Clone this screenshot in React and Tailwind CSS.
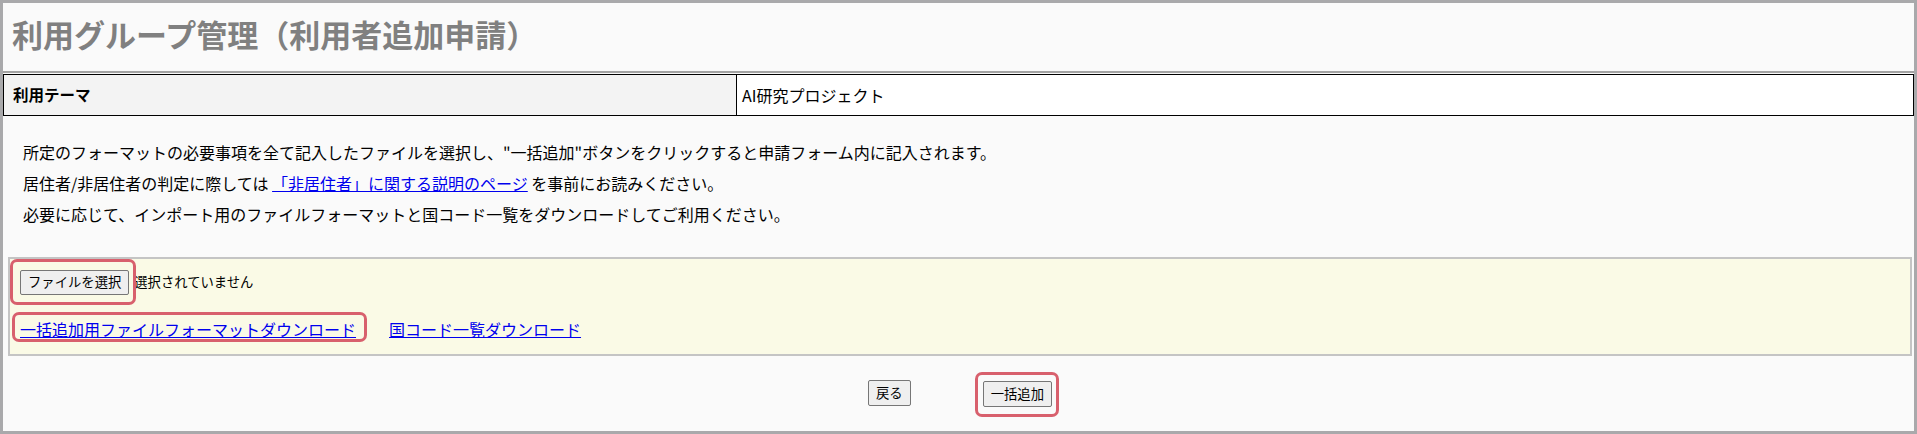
export default function App() {
  const redBox =
    "pointer-events-none absolute border-[3px] border-[#d8606d] rounded-[7px]";
  const btn =
    "h-[26px] px-[7px] bg-[#efefef] border border-[#767676] rounded-[2px] text-[13.33px] leading-none text-black";

  return (
    <div className="h-[434px] w-full border-[3px] border-[#a9a9ab] bg-[#fafafa] font-['Noto_Sans_CJK_JP',sans-serif] text-black">
      {/* Title */}
      <div className="h-[70px] border-b-2 border-[#a3a3a3] pl-[9px] pt-[15px]">
        <h1 className="text-[31px] leading-[31px] font-bold text-[#808080]">
          利用グループ管理（利用者追加申請）
        </h1>
      </div>

      {/* Theme row */}
      <div className="mt-[1px] flex h-[42px] border border-black">
        <div className="flex w-[733px] items-center border-r border-black bg-[#f3f3f3] pl-[9px] text-[15.5px] font-bold">
          利用テーマ
        </div>
        <div className="flex flex-1 items-center bg-white pl-[5px] text-[16px]">
          AI研究プロジェクト
        </div>
      </div>

      {/* Description */}
      <div className="mt-[21px] pl-[20px] text-[16px] leading-[31px]">
        <p>
          所定のフォーマットの必要事項を全て記入したファイルを選択し、"一括追加"ボタンをクリックすると申請フォーム内に記入されます。
        </p>
        <p>
          居住者/非居住者の判定に際しては{" "}
          <a href="#" className="text-[#0000ee] underline">
            「非居住者」に関する説明のページ
          </a>{" "}
          を事前にお読みください。
        </p>
        <p>
          必要に応じて、インポート用のファイルフォーマットと国コード一覧をダウンロードしてご利用ください。
        </p>
      </div>

      {/* Import box */}
      <div className="ml-[5px] mr-[2px] mt-[27px] h-[99px] border-2 border-[#c4c4c4] bg-[#fafae6] pl-[10px] pt-[10px]">
        <div className="flex h-[25px] items-center">
          <div className="relative">
            <button className="h-[25px] px-[7px] bg-[#efefef] border border-[#767676] rounded-[2px] text-[13.33px] leading-none">
              ファイルを選択
            </button>
            <span className={`${redBox} -left-[10px] -top-[9px] -right-[7px] -bottom-[10px]`} />
          </div>
          <span className="ml-[5px] text-[13.33px]">選択されていません</span>
        </div>
        <div className="mt-[23px] flex text-[16px] leading-[24px]">
          <div className="relative">
            <a href="#" className="text-[#0000ee] underline">
              一括追加用ファイルフォーマットダウンロード
            </a>
            <span className={`${redBox} -left-[8px] -top-[5px] -right-[11px] -bottom-[1px]`} />
          </div>
          <a href="#" className="ml-[33px] text-[#0000ee] underline">
            国コード一覧ダウンロード
          </a>
        </div>
      </div>

      {/* Actions */}
      <div className="mt-[24px] flex justify-center gap-[72px] pl-[3px]">
        <button className={btn}>戻る</button>
        <div className="relative">
          <button className={btn}>一括追加</button>
          <span className={`${redBox} -left-[8px] -top-[8px] -right-[7px] -bottom-[10px]`} />
        </div>
      </div>
    </div>
  );
}
